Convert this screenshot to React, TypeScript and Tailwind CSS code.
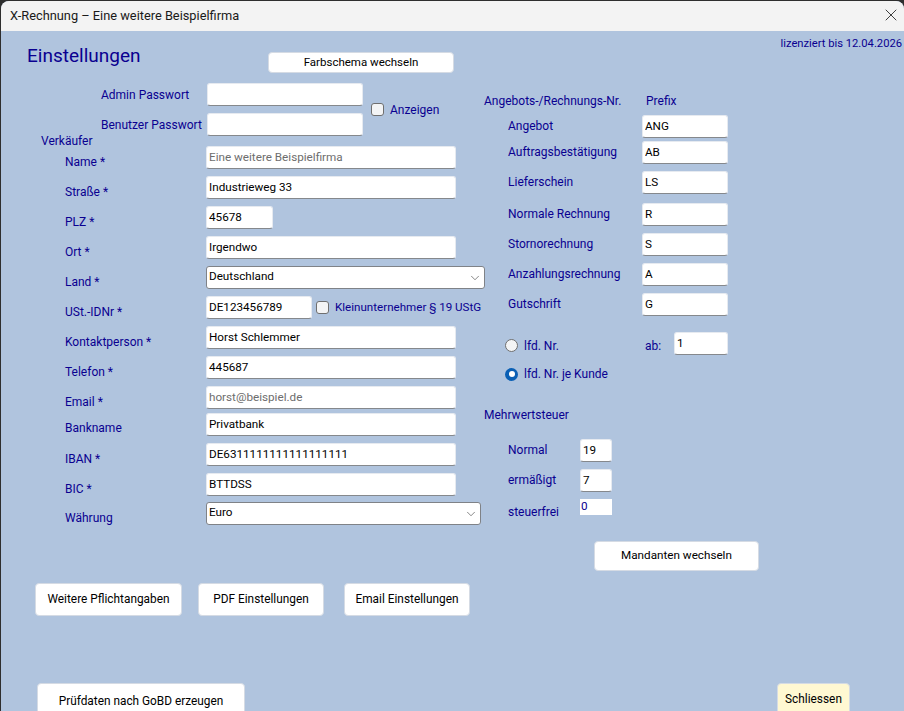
import { ChevronDown, X } from "lucide-react";

const ink = "text-[#0a0090]";

function Field({ value, w, muted, h = "h-[23px]" }: { value: string; w: string; muted?: boolean; h?: string }) {
  return (
    <input
      readOnly
      defaultValue={value}
      className={`${w} ${h} shrink-0 rounded-[3px] border border-[#e6eaf0] border-b-[#85888c] bg-white pl-[2px] pr-1 pb-[2px] text-[11.7px] outline-none ${muted ? "text-[#6d6d6d]" : "text-black"}`}
    />
  );
}

function Select({ value, w }: { value: string; w: string }) {
  return (
    <div className={`${w} flex h-[23px] shrink-0 items-center justify-between rounded-[3px] border border-[#7f8287] bg-white pl-[2px] pr-[2px] pb-[2px] text-[11.7px] text-black`}>
      <span>{value}</span>
      <ChevronDown size={14} strokeWidth={1} className="mt-[2px] text-[#333]" />
    </div>
  );
}

function Check() {
  return <span className="h-[13px] w-[13px] shrink-0 rounded-[3px] border border-[#6f6f6f] bg-[#f3f4f5]" />;
}

function Btn({ label, cls }: { label: string; cls: string }) {
  return (
    <button className={`${cls} shrink-0 rounded-[4px] border border-[#d5dbe4] text-black`}>{label}</button>
  );
}

function Row({ label, mt, pt = "pt-[9px] leading-[14px]", children }: { label: string; mt: string; pt?: string; children: React.ReactNode }) {
  return (
    <div className={`flex items-start ${mt}`}>
      <div className={`w-[205px] shrink-0 pl-[64px] ${pt}`}>{label}</div>
      {children}
    </div>
  );
}

function Prefix({ label, value, mt }: { label: string; value: string; mt: string }) {
  return (
    <div className={`flex items-center pl-[24px] ${mt}`}>
      <div className="w-[134px] shrink-0 pb-[2px] leading-4">{label}</div>
      <Field value={value} w="w-[86px]" />
    </div>
  );
}

function Vat({ label, mt, children }: { label: string; mt: string; children: React.ReactNode }) {
  return (
    <div className={`flex items-center pl-[24px] ${mt}`}>
      <div className="w-[72px] shrink-0 pb-[2px] leading-4">{label}</div>
      {children}
    </div>
  );
}

export default function App() {
  return (
    <div className="h-[711px] w-[904px] overflow-hidden bg-[#2e2e2e] pl-px pt-px font-['Roboto','Noto_Sans',sans-serif]">
      <div className={`flex h-[710px] flex-col overflow-hidden rounded-t-[8px] bg-[#b0c4de] text-[12px] ${ink}`}>
        <div className="flex h-[30px] shrink-0 items-center justify-between bg-[#f3f3f3] pl-[9px] pr-[3px] text-[12.8px] text-[#1a1a1a]">
          <span>X-Rechnung – Eine weitere Beispielfirma</span>
          <X size={20} strokeWidth={0.9} className="mb-[2px] text-black" />
        </div>

        <div className="flex shrink-0 items-start">
          <div className="w-[483px] shrink-0">
            <div className="flex h-[52px] items-start pl-[26px]">
              <div className="mt-[13px] w-[241px] shrink-0 text-[19px] leading-6">Einstellungen</div>
              <Btn label="Farbschema wechseln" cls="mt-[21px] h-[21px] w-[186px] bg-white text-[11.5px]" />
            </div>

            <div className="flex items-center pl-[100px]">
              <div className="flex flex-col gap-[7px]">
                <div className="flex items-center">
                  <div className="w-[106px] shrink-0 leading-4">Admin Passwort</div>
                  <Field value="" w="w-[156px]" />
                </div>
                <div className="flex items-center">
                  <div className="w-[106px] shrink-0 leading-4">Benutzer Passwort</div>
                  <Field value="" w="w-[156px]" />
                </div>
              </div>
              <div className="ml-[8px] flex items-center gap-[6px]">
                <Check />
                <span>Anzeigen</span>
              </div>
            </div>

            <div className="-my-[3px] h-4 pl-[40px] leading-4">Verkäufer</div>

            <Row label="Name *" mt="mt-0"><Field value="Eine weitere Beispielfirma" w="w-[250px]" muted /></Row>
            <Row label="Straße *" mt="mt-[7px]"><Field value="Industrieweg 33" w="w-[250px]" /></Row>
            <Row label="PLZ *" mt="mt-[7px]"><Field value="45678" w="w-[67px]" /></Row>
            <Row label="Ort *" mt="mt-[7px]"><Field value="Irgendwo" w="w-[250px]" /></Row>
            <Row label="Land *" mt="mt-[7px]"><Select value="Deutschland" w="w-[279px]" /></Row>
            <Row label="USt.-IDNr *" mt="mt-[7px]">
              <Field value="DE123456789" w="w-[106px]" />
              <div className="ml-[4px] flex h-[23px] items-center gap-[6px] whitespace-nowrap text-[11.6px]">
                <Check />
                <span>Kleinunternehmer § 19 UStG</span>
              </div>
            </Row>
            <Row label="Kontaktperson *" mt="mt-[7px]"><Field value="Horst Schlemmer" w="w-[250px]" /></Row>
            <Row label="Telefon *" mt="mt-[7px]"><Field value="445687" w="w-[250px]" /></Row>
            <Row label="Email *" mt="mt-[7px]"><Field value="horst@beispiel.de" w="w-[250px]" muted /></Row>
            <Row label="Bankname" mt="mt-[4px]" pt="pt-[7px] leading-4"><Field value="Privatbank" w="w-[250px]" /></Row>
            <Row label="IBAN *" mt="mt-[7px]"><Field value="DE6311111111111111111" w="w-[250px]" /></Row>
            <Row label="BIC *" mt="mt-[7px]"><Field value="BTTDSS" w="w-[250px]" /></Row>
            <Row label="Währung" mt="mt-[6px]" pt="pt-[10px] leading-[13px]"><Select value="Euro" w="w-[275px]" /></Row>
          </div>

          <div className="min-w-0 flex-1">
            <div className="mt-[5px] pr-[2px] text-right text-[11.2px] leading-4">lizenziert bis 12.04.2026</div>
            <div className="mt-[41px] flex leading-4">
              <div className="w-[162px] shrink-0">Angebots-/Rechnungs-Nr.</div>
              <div>Prefix</div>
            </div>
            <Prefix label="Angebot" value="ANG" mt="mt-[6px]" />
            <Prefix label="Auftragsbestätigung" value="AB" mt="mt-[3px]" />
            <Prefix label="Lieferschein" value="LS" mt="mt-[7px]" />
            <Prefix label="Normale Rechnung" value="R" mt="mt-[9px]" />
            <Prefix label="Stornorechnung" value="S" mt="mt-[7px]" />
            <Prefix label="Anzahlungsrechnung" value="A" mt="mt-[7px]" />
            <Prefix label="Gutschrift" value="G" mt="mt-[7px]" />

            <div className="mt-[16px] flex items-start pl-[21px]">
              <span className="mt-[7px] h-[13px] w-[13px] shrink-0 rounded-full border border-[#6f6f6f] bg-[#f3f4f5]" />
              <div className="ml-[6px] w-[121px] shrink-0 pt-[6px] leading-4">lfd. Nr.</div>
              <div className="w-[29px] shrink-0 pt-[6px] leading-4">ab:</div>
              <Field value="1" w="w-[54px]" />
            </div>
            <div className="mt-[11px] flex items-center pl-[21px]">
              <span className="flex h-[13px] w-[13px] shrink-0 items-center justify-center rounded-full bg-[#0a5fb4]">
                <span className="h-[6px] w-[6px] rounded-full bg-white" />
              </span>
              <div className="ml-[6px] leading-4">lfd. Nr. je Kunde</div>
            </div>

            <div className="mt-[25px] leading-4">Mehrwertsteuer</div>
            <Vat label="Normal" mt="mt-[16px]"><Field value="19" w="w-[32px]" /></Vat>
            <Vat label="ermäßigt" mt="mt-[7px]"><Field value="7" w="w-[32px]" /></Vat>
            <div className="mt-[7px] flex items-start pl-[24px]">
              <div className="w-[72px] shrink-0 pt-[5px] leading-4">steuerfrei</div>
              <div className="h-4 w-[32px] bg-white pl-px text-[11.7px] leading-[14px]">0</div>
            </div>
          </div>
        </div>

        <div className="mt-[16px] flex shrink-0 pl-[593px]">
          <Btn label="Mandanten wechseln" cls="h-[30px] w-[165px] bg-white text-[11.7px]" />
        </div>

        <div className="mt-[12px] flex shrink-0 pl-[34px] text-[11.85px]">
          <Btn label="Weitere Pflichtangaben" cls="h-[33px] w-[147px] bg-white" />
          <Btn label="PDF Einstellungen" cls="ml-[16px] h-[33px] w-[126px] bg-white" />
          <Btn label="Email Einstellungen" cls="ml-[20px] h-[33px] w-[126px] bg-white" />
        </div>

        <div className="mt-[67px] flex shrink-0 items-start justify-between pl-[36px] pr-[54px] text-[11.85px]">
          <Btn label="Prüfdaten nach GoBD erzeugen" cls="h-[38px] w-[208px] bg-white" />
          <Btn label="Schliessen" cls="h-[34px] w-[73px] bg-[#fff8d2]" />
        </div>
      </div>
    </div>
  );
}
